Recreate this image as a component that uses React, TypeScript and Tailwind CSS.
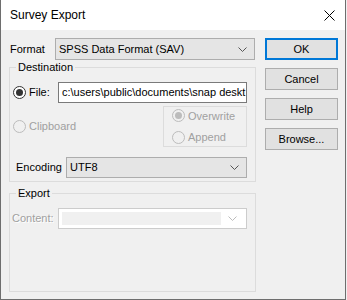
import React from 'react';

const font = { fontFamily: '"Liberation Sans", Arial, sans-serif' };

const Chevron = ({ color = '#555' }: { color?: string }) => (
  <svg width="9" height="5" viewBox="0 0 9 5" className="shrink-0">
    <path d="M0.5 0.5 L4.5 4.5 L8.5 0.5" fill="none" stroke={color} strokeWidth="1" />
  </svg>
);

const Combo = ({ value, className = '' }: { value: string; className?: string }) => (
  <div
    className={`flex items-center h-[21px] border border-[#adadad] bg-[#e5e5e5] pl-[3px] pr-[7px] text-[11px] text-black ${className}`}
  >
    <span className="flex-1">{value}</span>
    <Chevron />
  </div>
);

const Radio = ({ checked = false, disabled = false }: { checked?: boolean; disabled?: boolean }) => (
  <span
    className={`flex items-center justify-center w-[13px] h-[13px] rounded-full border shrink-0 ${
      disabled ? 'border-[#bcbcbc] bg-[#f0f0f0]' : 'border-[#333333] bg-white'
    }`}
  >
    {checked && (
      <span className={`w-[7px] h-[7px] rounded-full ${disabled ? 'bg-[#bcbcbc]' : 'bg-[#333333]'}`} />
    )}
  </span>
);

const Button = ({ label, primary = false }: { label: string; primary?: boolean }) => (
  <div
    className={`flex items-center justify-center w-[73px] h-[22px] bg-[#e1e1e1] text-[11px] text-black ${
      primary ? 'border-2 border-[#0078d7]' : 'border border-[#adadad]'
    }`}
  >
    {label}
  </div>
);

export default function App() {
  return (
    <div className="w-[347px] h-[300px] bg-[#f0f0f0]" style={font}>
      <div className="w-[346px] h-[300px] flex flex-col border-l border-r border-b border-[#6e6e6e]">
        <div className="h-[30px] bg-white flex items-center justify-between pl-[9px] pr-[10px]">
          <span className="text-[12px] text-black">Survey Export</span>
          <svg width="11" height="11" viewBox="0 0 11 11">
            <path d="M0.5 0.5 L10.5 10.5 M10.5 0.5 L0.5 10.5" stroke="#000" strokeWidth="1" />
          </svg>
        </div>

        <div className="flex-1 flex bg-[#f0f0f0] pl-[8px] pt-[8px]">
          <div className="w-[247px] flex flex-col">
            <div className="flex items-center h-[22px]">
              <span className="w-[46px] pl-[1px] text-[11px] text-black">Format</span>
              <Combo value="SPSS Data Format (SAV)" className="w-[200px] h-[22px]" />
            </div>

            <div className="relative mt-[7px] border border-[#dcdcdc] pl-[3px] pr-[8px] pb-[3px]">
              <span className="absolute left-[6px] -top-[7px] px-[2px] bg-[#f0f0f0] text-[11px] leading-[13px] text-black">
                Destination
              </span>
              <div className="flex items-center mt-[14px] h-[21px]">
                <Radio checked />
                <span className="ml-[3px] w-[29px] text-[11px] text-black">File:</span>
                <div className="flex-1 h-[21px] border border-[#7a7a7a] bg-white flex items-center pl-[3px] overflow-hidden whitespace-nowrap text-[11px] text-black">
                  c:\users\public\documents\snap deskt
                </div>
              </div>
              <div className="flex items-center mt-[3px]">
                <Radio disabled />
                <span className="ml-[3px] text-[11px] text-[#a0a0a0]">Clipboard</span>
                <div className="ml-auto w-[84px] h-[41px] border border-[#dcdcdc] flex flex-col justify-center gap-[5px] pl-[8px]">
                  <div className="flex items-center">
                    <Radio checked disabled />
                    <span className="ml-[3px] text-[11px] text-[#a0a0a0]">Overwrite</span>
                  </div>
                  <div className="flex items-center">
                    <Radio disabled />
                    <span className="ml-[3px] text-[11px] text-[#a0a0a0]">Append</span>
                  </div>
                </div>
              </div>
              <div className="flex items-center mt-[10px]">
                <span className="w-[53px] pl-[3px] text-[11px] text-black">Encoding</span>
                <Combo value="UTF8" className="flex-1" />
              </div>
            </div>

            <div className="relative mt-[11px] h-[99px] border border-[#dcdcdc] pl-[2px] pr-[8px]">
              <span className="absolute left-[6px] -top-[7px] px-[2px] bg-[#f0f0f0] text-[11px] leading-[13px] text-black">
                Export
              </span>
              <div className="flex items-center mt-[14px]">
                <span
                  className="w-[46px] text-[11px] text-[#a0a0a0]"
                  style={{ textShadow: '1px 1px 0 #ffffff' }}
                >
                  Content:
                </span>
                <div className="flex-1 h-[21px] border border-[#cccccc] bg-white flex items-center p-[3px]">
                  <div className="flex-1 h-full bg-[#f0f0f0]" />
                  <div className="w-[22px] flex justify-center">
                    <Chevron color="#bcbcbc" />
                  </div>
                </div>
              </div>
            </div>
          </div>

          <div className="ml-[9px] flex flex-col gap-[8px]">
            <Button label="OK" primary />
            <Button label="Cancel" />
            <Button label="Help" />
            <Button label="Browse..." />
          </div>
        </div>
      </div>
    </div>
  );
}
